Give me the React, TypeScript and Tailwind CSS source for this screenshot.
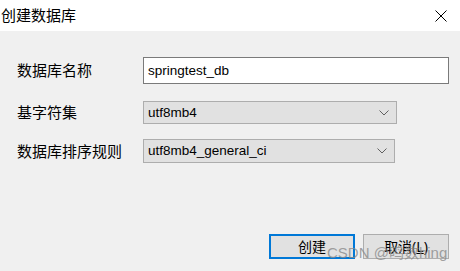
import { ReactNode } from "react";

const ui = { fontFamily: '"Noto Sans", "Noto Sans CJK SC", sans-serif' };
const latin = { fontFamily: '"Liberation Sans", "Noto Sans CJK SC", sans-serif' };

function Chevron() {
  return (
    <svg width="10" height="6" viewBox="0 0 10 6" className="shrink-0">
      <path d="M0.5 0.5 L5 5 L9.5 0.5" fill="none" stroke="#606060" strokeWidth="1" />
    </svg>
  );
}

function Row({ label, children, className }: { label: string; children: ReactNode; className?: string }) {
  return (
    <div className={`flex items-center ${className ?? ""}`}>
      <div className="w-[126px] text-[15px] leading-none text-black">{label}</div>
      {children}
    </div>
  );
}

function Select({ value, width, height }: { value: string; width: string; height: string }) {
  return (
    <div
      className={`flex items-center justify-between border border-[#adadad] bg-[#e1e1e1] pl-[4px] pr-[7px] ${width} ${height}`}
    >
      <span className="text-[13.5px] leading-none text-black" style={latin}>
        {value}
      </span>
      <Chevron />
    </div>
  );
}

export default function App() {
  return (
    <div className="relative flex h-[271px] w-[460px] flex-col overflow-hidden bg-[#f0f0f0]" style={ui}>
      {/* title bar */}
      <div className="flex h-[31px] items-center justify-between bg-white pl-[1px] pr-[13px]">
        <span className="text-[15px] leading-none text-black">创建数据库</span>
        <svg width="12" height="12" viewBox="0 0 12 12">
          <path d="M0.5 0.5 L11.5 11.5 M11.5 0.5 L0.5 11.5" stroke="#000" strokeWidth="1" />
        </svg>
      </div>

      {/* form */}
      <div className="flex flex-col pl-[17px] pt-[26px]">
        <Row label="数据库名称">
          <div className="flex h-[27px] w-[306px] items-center border border-[#7a7a7a] bg-white pl-[4px]">
            <span className="text-[13.5px] leading-none text-black" style={latin}>
              springtest_db
            </span>
          </div>
        </Row>
        <Row label="基字符集" className="mt-[17px]">
          <Select value="utf8mb4" width="w-[254px]" height="h-[23px]" />
        </Row>
        <Row label="数据库排序规则" className="mt-[15px]">
          <Select value="utf8mb4_general_ci" width="w-[252px]" height="h-[24px]" />
        </Row>
      </div>

      {/* buttons */}
      <div className="mt-auto flex justify-end gap-[8px] pb-[12px] pr-[11px]">
        <button className="flex h-[25px] w-[86px] items-center justify-center border-2 border-[#0078d7] bg-[#e1e1e1] text-[14px] leading-none text-black">
          创建
        </button>
        <button className="flex h-[25px] w-[86px] items-center justify-center border border-[#adadad] bg-[#e1e1e1] text-[14px] leading-none text-black">
          取消(<span className="underline">L</span>)
        </button>
      </div>

      {/* watermark */}
      <div
        className="pointer-events-none absolute left-[327px] top-[245px] text-[15px] leading-none text-[#8a8a8a]/80"
        style={latin}
      >
        CSDN @鸣数hing
      </div>
    </div>
  );
}
